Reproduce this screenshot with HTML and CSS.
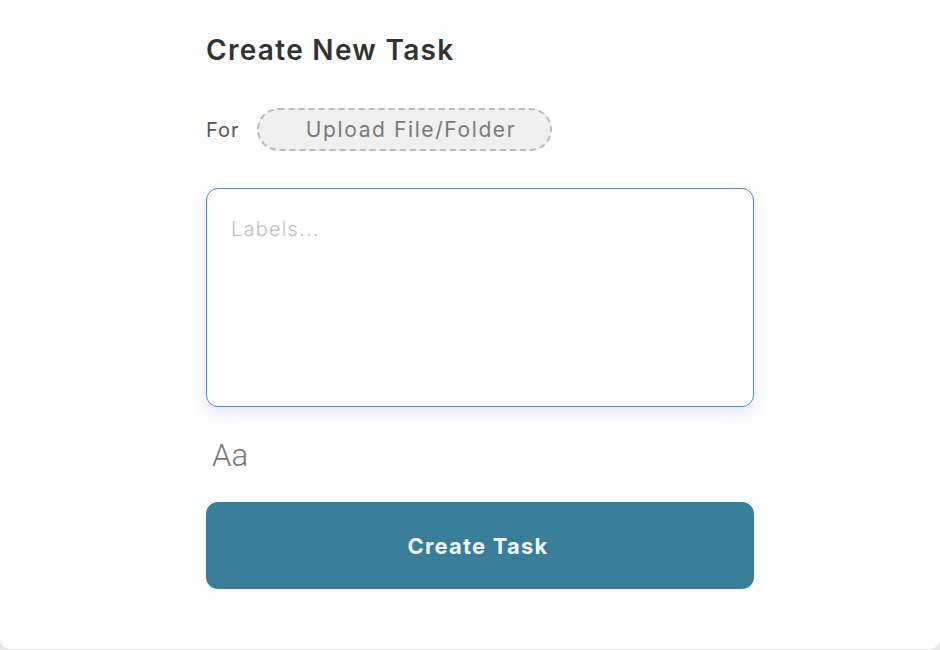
FILE: index.html
```html
<!DOCTYPE html>
<html lang="en">
<head>
<meta charset="utf-8">
<title>Create New Task</title>
<link rel="stylesheet" href="styles.css">
</head>
<body>
<div class="card">
  <form class="task-form">
    <h1 class="title">Create New Task</h1>
    <div class="for-row">
      <span class="for-label">For</span>
      <button type="button" class="upload-pill">Upload File/Folder</button>
    </div>
    <textarea class="labels" placeholder="Labels..."></textarea>
    <div class="format">Aa</div>
    <button type="button" class="submit">Create Task</button>
  </form>
</div>
</body>
</html>
```

FILE: styles.css
```css
* { box-sizing: border-box; }

html, body {
  margin: 0;
  padding: 0;
}

body {
  background: #e8e8e8;
  width: 940px;
  height: 650px;
  overflow: hidden;
  font-family: Inter, "Noto Sans", sans-serif;
}

.card {
  width: 940px;
  height: 649px;
  background: #ffffff;
  border-radius: 0 0 10px 10px;
  padding: 30px 0 0 206px;
}

.task-form {
  width: 548px;
  display: flex;
  flex-direction: column;
}

.title {
  margin: 0;
  font-size: 28px;
  line-height: 40px;
  font-weight: 600;
  color: #333333;
  letter-spacing: 1.3px;
}

.for-row {
  margin-top: 38px;
  height: 43px;
  display: flex;
  align-items: center;
  gap: 17px;
}

.for-label {
  font-size: 20px;
  color: #555555;
  font-weight: 400;
  letter-spacing: 1px;
}

.upload-pill {
  height: 43px;
  width: 295px;
  border: 2px dashed #bcbcbc;
  border-radius: 22px;
  background: #f0f0f0;
  color: #7a7a7a;
  font-family: inherit;
  font-size: 21px;
  font-weight: 400;
  letter-spacing: 1.6px;
  padding: 0 0 0 14px;
  cursor: pointer;
}

.labels {
  margin-top: 37px;
  height: 219px;
  width: 548px;
  border: 1.5px solid #4a84ee;
  border-radius: 12px;
  padding: 28px 24px;
  resize: none;
  outline: none;
  font-family: inherit;
  font-size: 20px;
  line-height: 24px;
  letter-spacing: 1.2px;
  color: #333;
  box-shadow: 0 6px 16px rgba(90, 110, 230, 0.16);
}

.labels::placeholder {
  color: #c2c2c2;
  font-weight: 300;
}

.format {
  margin-top: 29px;
  height: 40px;
  line-height: 40px;
  padding-left: 6px;
  font-family: Roboto, sans-serif;
  font-weight: 300;
  font-size: 31px;
  color: #777777;
}

.submit {
  margin-top: 26px;
  height: 87px;
  width: 548px;
  border: none;
  border-radius: 12px;
  background: #387e98;
  color: #f2f4f5;
  font-family: inherit;
  font-size: 22px;
  font-weight: 700;
  letter-spacing: 1.2px;
  padding: 0 4px 0 0;
  cursor: pointer;
}
```
